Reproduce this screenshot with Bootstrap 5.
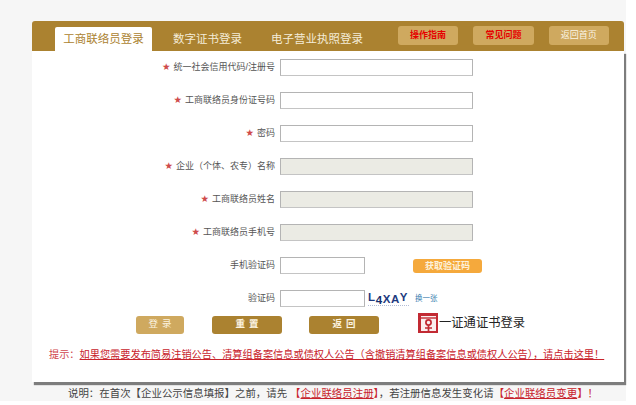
<!DOCTYPE html>
<html lang="zh-CN">
<head>
    <meta charset="UTF-8">
    <meta name="viewport" content="width=device-width, initial-scale=1.0">
    <title>工商联络员登录</title>
    <link href="https://cdn.jsdelivr.net/npm/bootstrap@5.3.0/dist/css/bootstrap.min.css" rel="stylesheet">
    <style>
        html, body {
            height: 405px;
            overflow: hidden;
            background-color: #fff;
        }
        body {
            font-family: "Liberation Sans", "Noto Sans CJK SC", sans-serif;
            font-size: 9px;
            color: #555;
        }
        .page-wrap {
            width: 626px;
            height: 401px;
            background-color: #f6f6f6;
            padding: 21px 0 0 32px;
        }
        .login-box {
            width: 592px;
            height: 361px;
        }
        .login-head {
            height: 30px;
            background-color: #ab8230;
            border-radius: 3px 3px 0 0;
            padding-left: 23px;
        }
        .tab-item {
            height: 24px;
            margin-top: 6px;
            line-height: 25px;
            font-size: 11.5px;
            color: #f4ecd8;
            white-space: nowrap;
        }
        .tab-item.active-tab {
            width: 98px;
            background-color: #fff;
            color: #ab8230;
            border-radius: 2px 2px 0 0;
            text-align: center;
        }
        .tab-2 { margin-left: 21px; }
        .tab-3 { margin-left: 29px; }
        .head-btn {
            width: 61px;
            height: 19px;
            margin-top: 5px;
            margin-right: 15px;
            background-color: #cfa95f;
            border-radius: 3px;
            text-align: center;
            line-height: 19px;
            font-size: 9px;
            color: #e60000;
            font-weight: 700;
            text-decoration: none;
        }
        .head-btn.plain { color: #fbf5e6; font-weight: 400; }
        .head-btn:first-of-type { margin-left: 35px; }
        .form-area {
            height: 331px;
            padding-top: 8px;
            background-color: #fff;
            box-shadow: 2px 3px 1px #7d7d7d;
        }
        .form-line {
            height: 17px;
            margin-bottom: 16px;
        }
        .form-line label {
            width: 248px;
            text-align: right;
            padding-right: 5px;
            white-space: nowrap;
        }
        .req {
            color: #cf4b4b;
            font-family: "DejaVu Sans", sans-serif;
            font-size: 9.5px;
            margin-right: 3px;
            line-height: 1;
        }
        .txt-in {
            width: 193px;
            height: 17px;
            border: 1px solid #b4b4b4;
            border-bottom-color: #c4c4c4;
            background-color: #fff;
            padding: 0 3px;
            outline: none;
            border-radius: 0;
        }
        .txt-in:disabled { background-color: #ebebe4; }
        .txt-in.short { width: 85px; }
        .sms-btn {
            width: 69px;
            height: 14px;
            margin-left: 48px;
            background-color: #f5a93c;
            border: 0;
            border-radius: 3px;
            color: #fdf1da;
            font-size: 9px;
            font-weight: 700;
            line-height: 14px;
            padding: 0;
        }
        .captcha-txt {
            width: 41px;
            height: 15px;
            margin-left: 3px;
            font-family: "Liberation Sans", sans-serif;
            font-size: 11.5px;
            font-weight: 700;
            letter-spacing: 0.6px;
            color: #1d3a80;
            line-height: 13px;
            white-space: nowrap;
            border-bottom: 1px dotted #b4bdd6;
        }
        .cap-up { vertical-align: 2px; }
        .cap-down { vertical-align: -1px; color: #16306e; }
        .swap-link {
            margin-left: 6px;
            font-size: 7.5px;
            color: #3a7fb0;
            text-decoration: none;
        }
        .act-line {
            height: 21px;
            margin-top: -9px;
            padding-left: 104px;
        }
        .act-btn {
            height: 18px;
            border: 0;
            border-radius: 3px;
            background-color: #ab8230;
            color: #fbf3e0;
            font-size: 9.5px;
            font-weight: 700;
            padding: 0 0 0 4px;
            letter-spacing: 4px;
            width: 70px;
            margin-left: 27px;
        }
        .act-btn.light { background-color: #cfa95f; width: 48px; margin-left: 0; font-weight: 400; }
        .act-btn.mid { margin-left: 28px; }
        .cert-login {
            margin-left: 39px;
            margin-top: -3px;
            font-size: 12.3px;
            color: #222;
            white-space: nowrap;
            text-decoration: none;
        }
        .cert-login svg { margin-right: 1px; }
        .tip-line {
            margin-top: 12px;
            padding-left: 17px;
            font-size: 10.2px;
            color: #d0454d;
            white-space: nowrap;
        }
        .tip-line a { color: #c8232c; }
        .foot-note {
            height: 18px;
            margin-top: 3px;
            margin-left: 36px;
            font-size: 10.45px;
            line-height: 18px;
            color: #444;
            white-space: nowrap;
        }
        .foot-note a { color: #c8232c; }
        .foot-note .redtxt { color: #c8232c; }
    </style>
</head>
<body>
    <div class="page-wrap">
        <div class="login-box">
            <!-- 顶部标签 -->
            <div class="login-head d-flex">
                <div class="tab-item active-tab">工商联络员登录</div>
                <div class="tab-item tab-2">数字证书登录</div>
                <div class="tab-item tab-3">电子营业执照登录</div>
                <a class="head-btn" href="#">操作指南</a>
                <a class="head-btn" href="#">常见问题</a>
                <a class="head-btn plain" href="#">返回首页</a>
            </div>

            <form class="form-area">
                <div class="form-line d-flex align-items-center">
                    <label><span class="req">★</span>统一社会信用代码/注册号</label>
                    <input class="txt-in" type="text">
                </div>
                <div class="form-line d-flex align-items-center">
                    <label><span class="req">★</span>工商联络员身份证号码</label>
                    <input class="txt-in" type="text">
                </div>
                <div class="form-line d-flex align-items-center">
                    <label><span class="req">★</span>密码</label>
                    <input class="txt-in" type="password">
                </div>
                <div class="form-line d-flex align-items-center">
                    <label><span class="req">★</span>企业（个体、农专）名称</label>
                    <input class="txt-in" type="text" disabled>
                </div>
                <div class="form-line d-flex align-items-center">
                    <label><span class="req">★</span>工商联络员姓名</label>
                    <input class="txt-in" type="text" disabled>
                </div>
                <div class="form-line d-flex align-items-center">
                    <label><span class="req">★</span>工商联络员手机号</label>
                    <input class="txt-in" type="text" disabled>
                </div>
                <div class="form-line d-flex align-items-center">
                    <label>手机验证码</label>
                    <input class="txt-in short" type="text">
                    <button class="sms-btn" type="button">获取验证码</button>
                </div>
                <div class="form-line d-flex align-items-center">
                    <label>验证码</label>
                    <input class="txt-in short" type="text">
                    <span class="captcha-txt"><span class="cap-up">L</span><span class="cap-down">4</span><span>X</span><span>A</span><span class="cap-up">Y</span></span>
                    <a class="swap-link" href="#">换一张</a>
                </div>
                <div class="act-line d-flex align-items-center">
                    <button class="act-btn light" type="button">登录</button>
                    <button class="act-btn mid" type="button">重置</button>
                    <button class="act-btn" type="button">返回</button>
                    <a class="cert-login d-flex align-items-center" href="#">
                        <svg width="20" height="20" viewBox="0 0 20 20">
                            <rect width="20" height="20" fill="#c22a33"/>
                            <rect x="3" y="3" width="15" height="15" fill="#fbeeee"/>
                            <path d="M3 5h15" stroke="#c22a33" stroke-width="1.4"/>
                            <circle cx="10.5" cy="9.5" r="2.6" fill="none" stroke="#c22a33" stroke-width="1.7"/>
                            <path d="M10.5 12v6M7 15h7" fill="none" stroke="#c22a33" stroke-width="1.7"/>
                        </svg>一证通证书登录
                    </a>
                </div>
                <div class="tip-line">提示：<a href="#">如果您需要发布简易注销公告、清算组备案信息或债权人公告（含撤销清算组备案信息或债权人公告），请点击这里！</a></div>
            </form>
        </div>
        <div class="foot-note">说明：在首次【企业公示信息填报】之前，请先 <span class="redtxt">【<a href="#">企业联络员注册</a>】</span>，若注册信息发生变化请<span class="redtxt">【<a href="#">企业联络员变更</a>】！</span></div>
    </div>

    <script src="https://cdn.jsdelivr.net/npm/bootstrap@5.3.0/dist/js/bootstrap.bundle.min.js"></script>
</body>
</html>
